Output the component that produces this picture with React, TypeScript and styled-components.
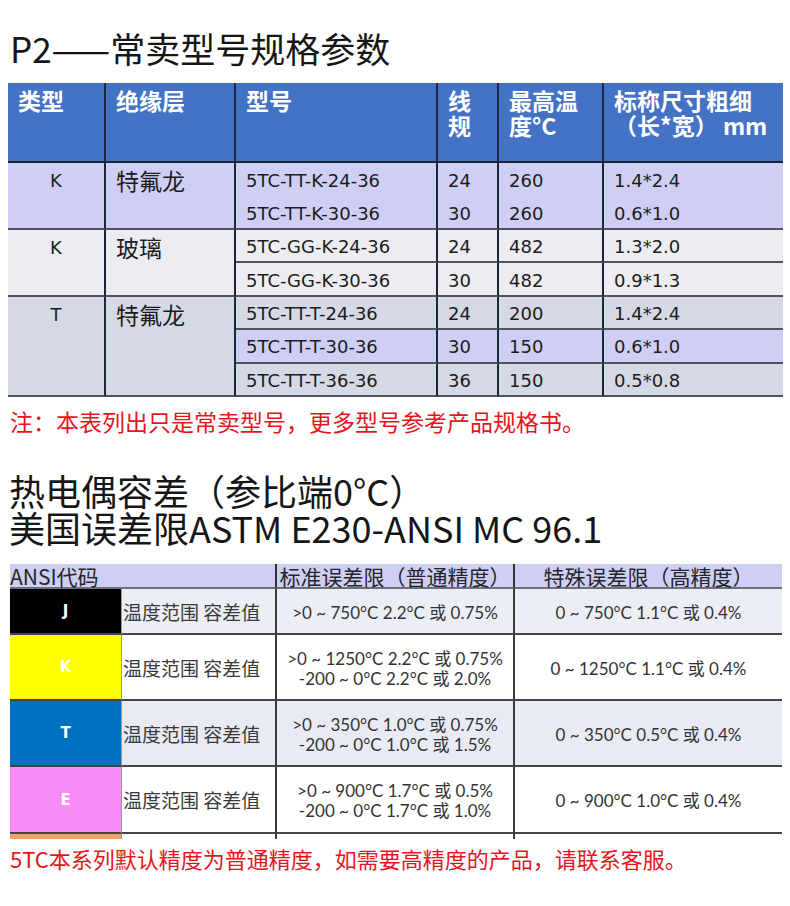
import React from 'react';
import styled, { createGlobalStyle } from 'styled-components';

const GlobalStyle = createGlobalStyle`
  html, body { margin: 0; padding: 0; background: #ffffff; }
  body { font-family: "Noto Sans CJK SC", sans-serif; }
`;

const lav = '#cfcff6';
const light = '#ededf1';
const slate = '#d5d8e5';

type SpecRow = { model: string; gauge: string; temp: string; size: string; bg: string };
type SpecGroup = { type: string; insulation: string; bg: string; splitRows: boolean; rows: SpecRow[] };

const groups: SpecGroup[] = [
  {
    type: 'K', insulation: '特氟龙', bg: lav, splitRows: false, rows: [
      { model: '5TC-TT-K-24-36', gauge: '24', temp: '260', size: '1.4*2.4', bg: lav },
      { model: '5TC-TT-K-30-36', gauge: '30', temp: '260', size: '0.6*1.0', bg: lav },
    ],
  },
  {
    type: 'K', insulation: '玻璃', bg: light, splitRows: true, rows: [
      { model: '5TC-GG-K-24-36', gauge: '24', temp: '482', size: '1.3*2.0', bg: light },
      { model: '5TC-GG-K-30-36', gauge: '30', temp: '482', size: '0.9*1.3', bg: light },
    ],
  },
  {
    type: 'T', insulation: '特氟龙', bg: slate, splitRows: true, rows: [
      { model: '5TC-TT-T-24-36', gauge: '24', temp: '200', size: '1.4*2.4', bg: slate },
      { model: '5TC-TT-T-30-36', gauge: '30', temp: '150', size: '0.6*1.0', bg: lav },
      { model: '5TC-TT-T-36-36', gauge: '36', temp: '150', size: '0.5*0.8', bg: slate },
    ],
  },
];

type TolRow = { code: string; color: string; bg: string; std: string[]; special: string };

const tolerances: TolRow[] = [
  { code: 'J', color: '#000000', bg: '#eceef5', std: ['>0 ~ 750°C 2.2°C 或 0.75%'], special: '0 ~ 750°C 1.1°C 或 0.4%' },
  { code: 'K', color: '#ffff00', bg: '#ffffff', std: ['>0 ~ 1250°C 2.2°C 或 0.75%', '-200 ~ 0°C 2.2°C 或 2.0%'], special: '0 ~ 1250°C 1.1°C 或 0.4%' },
  { code: 'T', color: '#0070c0', bg: '#e9ebf4', std: ['>0 ~ 350°C 1.0°C 或 0.75%', '-200 ~ 0°C 1.0°C 或 1.5%'], special: '0 ~ 350°C 0.5°C 或 0.4%' },
  { code: 'E', color: '#fa8cf7', bg: '#ffffff', std: ['>0 ~ 900°C 1.7°C 或 0.5%', '-200 ~ 0°C 1.7°C 或 1.0%'], special: '0 ~ 900°C 1.0°C 或 0.4%' },
];

const Page = styled.div`
  width: 790px;
  height: 906px;
  box-sizing: border-box;
  padding-top: 27px;
  display: flex;
  flex-direction: column;
  overflow: hidden;
  background: #ffffff;
`;

const Title = styled.h1`
  margin: 0 0 0 10px;
  font-family: "Noto Sans CJK SC", sans-serif;
  font-weight: 400;
  font-size: 35px;
  line-height: 42px;
  color: #161616;
  white-space: nowrap;
`;

const SubTitle = styled.h2`
  margin: 36px 0 0 9px;
  font-family: "Noto Sans CJK SC", sans-serif;
  font-weight: 400;
  font-size: 36px;
  line-height: 37px;
  color: #161616;
  white-space: nowrap;
`;

const Note = styled.p<{ $gap: number; $size: number }>`
  margin: ${p => p.$gap}px 0 0 10px;
  font-family: "Noto Sans CJK SC", sans-serif;
  font-size: ${p => p.$size}px;
  line-height: 30px;
  color: #e8141c;
  white-space: nowrap;
`;

/* ---------- spec table ---------- */

const SpecTable = styled.div`
  margin: 14px 0 0 8px;
  width: 775px;
  display: grid;
  grid-template-columns: 98px 130px 202px 61px 105px 179px;
  grid-template-rows: 80px;
  grid-auto-rows: 33.45px;
`;

const SpecHead = styled.div<{ $last?: boolean }>`
  box-sizing: border-box;
  background: #4472c4;
  color: #ffffff;
  font-family: "Noto Sans CJK SC", sans-serif;
  font-weight: 700;
  font-size: 23px;
  line-height: 25px;
  padding: 5px 0 0 10px;
  white-space: nowrap;
  border-bottom: 2px solid #1b2230;
  border-right: ${p => (p.$last ? 'none' : '2px solid #1d2940')};
`;

const GroupCell = styled.div<{ $bg: string; $span: number; $cjk?: boolean }>`
  box-sizing: border-box;
  grid-row: span ${p => p.$span};
  background: ${p => p.$bg};
  border-right: 2px solid #1d2638;
  border-bottom: 2px solid #50545c;
  padding: ${p => (p.$cjk ? '0 0 0 10px' : '6px 0 0 0')};
  text-align: ${p => (p.$cjk ? 'left' : 'center')};
  font-family: ${p => (p.$cjk ? '"Noto Sans CJK SC", sans-serif' : '"DejaVu Sans", sans-serif')};
  font-size: ${p => (p.$cjk ? 23 : 18)}px;
  line-height: ${p => (p.$cjk ? 34 : 24)}px;
  color: #1c1c1c;
`;

const ValueCell = styled.div<{ $bg: string; $line: boolean; $last?: boolean }>`
  box-sizing: border-box;
  display: flex;
  align-items: center;
  padding: 2px 0 0 10px;
  background: ${p => p.$bg};
  border-right: ${p => (p.$last ? 'none' : '2px solid #1d2638')};
  border-bottom: ${p => (p.$line ? '2px solid #50545c' : 'none')};
  font-family: "DejaVu Sans", sans-serif;
  font-size: 18px;
  color: #1c1c1c;
  white-space: nowrap;
`;

/* ---------- tolerance table ---------- */

const TolTable = styled.div`
  margin: 18px 0 0 10px;
  width: 772px;
  display: grid;
  grid-template-columns: 112px 155px 238px 267px;
  grid-template-rows: 25px 46px 66px 66px 67px 5px;
`;

const TolHead = styled.div<{ $wide?: boolean; $center?: boolean; $last?: boolean }>`
  box-sizing: border-box;
  grid-column: span ${p => (p.$wide ? 2 : 1)};
  display: flex;
  align-items: center;
  justify-content: ${p => (p.$center ? 'center' : 'flex-start')};
  background: #cfcff5;
  border-bottom: 2px solid #6e6e7e;
  border-right: ${p => (p.$last ? 'none' : '2px solid #333333')};
  font-family: "Noto Sans CJK SC", sans-serif;
  font-size: 21px;
  line-height: 22px;
  color: #262626;
  white-space: nowrap;
`;

const CodeCell = styled.div<{ $color: string }>`
  box-sizing: border-box;
  display: flex;
  align-items: center;
  justify-content: center;
  background: ${p => p.$color};
  border-right: 1px solid #9a9a9a;
  border-bottom: 2px solid #464646;
  font-family: "DejaVu Sans", sans-serif;
  font-weight: 700;
  font-size: 15px;
  color: #ffffff;
`;

const LabelCell = styled.div<{ $bg: string }>`
  box-sizing: border-box;
  display: flex;
  align-items: center;
  padding-left: 1px;
  background: ${p => p.$bg};
  border-right: 2px solid #3a3a3a;
  border-bottom: 2px solid #464646;
  font-family: "Noto Sans CJK SC", sans-serif;
  font-size: 19px;
  color: #3a3a3a;
  white-space: nowrap;
`;

const RangeCell = styled.div<{ $bg: string; $last?: boolean }>`
  box-sizing: border-box;
  display: flex;
  flex-direction: column;
  align-items: center;
  justify-content: center;
  padding-top: 3px;
  background: ${p => p.$bg};
  border-right: ${p => (p.$last ? 'none' : '2px solid #3a3a3a')};
  border-bottom: 2px solid #464646;
  font-family: Lato, "Noto Sans CJK SC", sans-serif;
  font-size: 17px;
  line-height: 20px;
  color: #333333;
  white-space: nowrap;
`;

const TailCell = styled.div<{ $color: string; $rule: string }>`
  background: ${p => p.$color};
  border-right: ${p => p.$rule};
`;

export default function App() {
  return (
    <>
      <GlobalStyle />
      <Page>
        <Title>P2——常卖型号规格参数</Title>

        <SpecTable>
          <SpecHead>类型</SpecHead>
          <SpecHead>绝缘层</SpecHead>
          <SpecHead>型号</SpecHead>
          <SpecHead>线<br />规</SpecHead>
          <SpecHead>最高温<br />度°C</SpecHead>
          <SpecHead $last>标称尺寸粗细<br />（长*宽） mm</SpecHead>
          {groups.map((g, gi) => (
            <React.Fragment key={gi}>
              <GroupCell $bg={g.bg} $span={g.rows.length}>{g.type}</GroupCell>
              <GroupCell $bg={g.bg} $span={g.rows.length} $cjk>{g.insulation}</GroupCell>
              {g.rows.map((r, ri) => {
                const line = g.splitRows || ri === g.rows.length - 1;
                return (
                  <React.Fragment key={ri}>
                    <ValueCell $bg={r.bg} $line={line}>{r.model}</ValueCell>
                    <ValueCell $bg={r.bg} $line={line}>{r.gauge}</ValueCell>
                    <ValueCell $bg={r.bg} $line={line}>{r.temp}</ValueCell>
                    <ValueCell $bg={r.bg} $line={line} $last>{r.size}</ValueCell>
                  </React.Fragment>
                );
              })}
            </React.Fragment>
          ))}
        </SpecTable>

        <Note $gap={9} $size={23}>注：本表列出只是常卖型号，更多型号参考产品规格书。</Note>

        <SubTitle>
          热电偶容差（参比端0°C）
          <br />
          美国误差限ASTM E230-ANSI MC 96.1
        </SubTitle>

        <TolTable>
          <TolHead $wide>ANSI代码</TolHead>
          <TolHead $center>标准误差限（普通精度）</TolHead>
          <TolHead $center $last>特殊误差限（高精度）</TolHead>
          {tolerances.map(t => (
            <React.Fragment key={t.code}>
              <CodeCell $color={t.color}>{t.code}</CodeCell>
              <LabelCell $bg={t.bg}>温度范围 容差值</LabelCell>
              <RangeCell $bg={t.bg}>
                {t.std.map(s => (
                  <span key={s}>{s}</span>
                ))}
              </RangeCell>
              <RangeCell $bg={t.bg} $last>{t.special}</RangeCell>
            </React.Fragment>
          ))}
          <TailCell $color="#f2a46c" $rule="1px solid #9a9a9a" />
          <TailCell $color="#ffffff" $rule="2px solid #3a3a3a" />
          <TailCell $color="#ffffff" $rule="2px solid #3a3a3a" />
          <TailCell $color="#ffffff" $rule="none" />
        </TolTable>

        <Note $gap={4} $size={22}>5TC本系列默认精度为普通精度，如需要高精度的产品，请联系客服。</Note>
      </Page>
    </>
  );
}
